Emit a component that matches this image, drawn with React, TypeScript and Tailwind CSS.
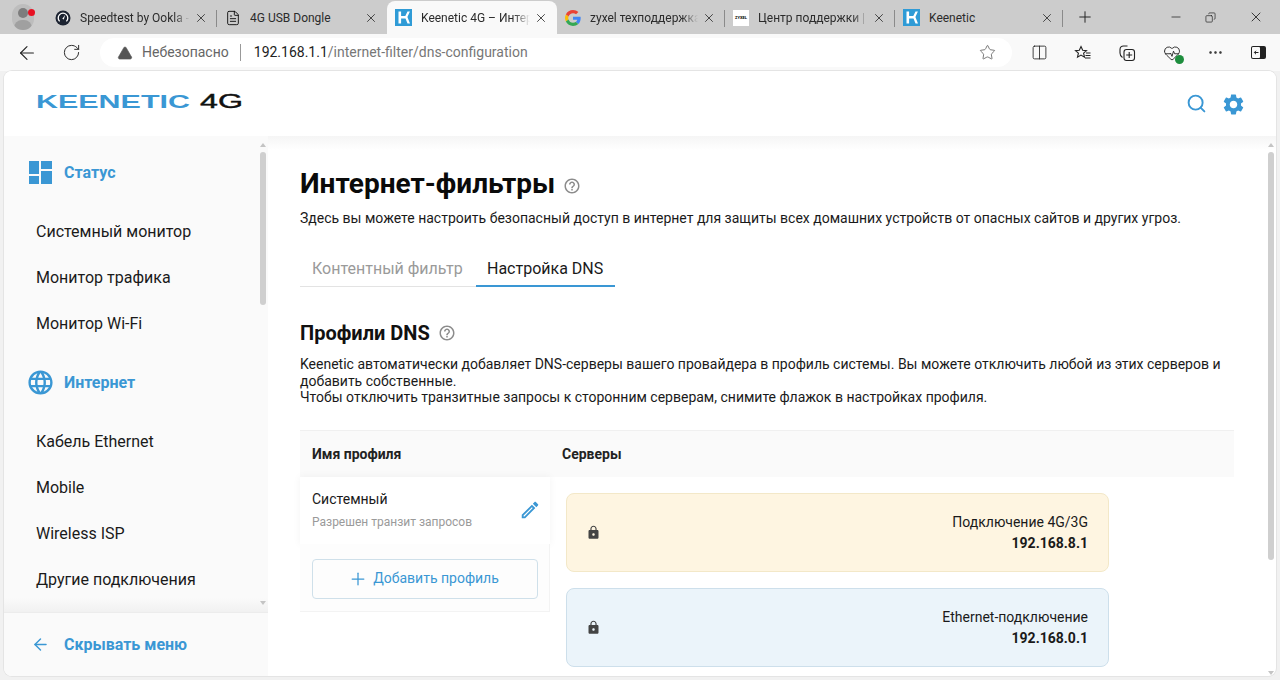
import { ArrowLeft, Columns2, FileText, Minus, MoreHorizontal, Plus, RotateCw, Search, Star, TriangleAlert, X, HeartPulse, Copy } from "lucide-react";
import { MdHelpOutline, MdLanguage, MdLock, MdOutlineEdit, MdSettings } from "react-icons/md";

const BLUE = "#3a97d4";

function KIcon() {
    return (
        <svg width="17" height="17" viewBox="0 0 17 17" className="shrink-0">
            <rect width="17" height="17" fill="#2f9bd6" />
            <path d="M3.5 2.5h2.600v4.600h4.200l2.200-4.600h2.400l-2.500 5.600 2.600 6.400h-2.500l-2-5H6.100v5H3.500z" fill="#fff" />
        </svg>
    );
}

function GoogleIcon() {
    return (
        <svg width="16" height="16" viewBox="0 0 48 48" className="shrink-0">
            <path fill="#EA4335" d="M24 9.500c3.500 0 6.700 1.200 9.200 3.600l6.900-6.900C35.900 2.400 30.400 0 24 0 14.600 0 6.500 5.400 2.600 13.200l8 6.200C12.500 13.600 17.800 9.500 24 9.500z" />
            <path fill="#4285F4" d="M47 24.500c0-1.600-.1-3.100-.4-4.500H24v9h12.900c-.6 3-2.200 5.500-4.700 7.200l7.700 6C44.400 38 47 31.800 47 24.500z" />
            <path fill="#FBBC05" d="M10.600 28.600c-.5-1.400-.8-3-.8-4.600s.3-3.200.8-4.600l-8-6.200C.9 16.500 0 20.100 0 24s.9 7.500 2.600 10.800l8-6.200z" />
            <path fill="#34A853" d="M24 48c6.500 0 11.900-2.100 15.900-5.800l-7.700-6c-2.200 1.400-4.900 2.300-8.200 2.300-6.200 0-11.500-4.100-13.400-9.900l-8 6.200C6.500 42.600 14.600 48 24 48z" />
        </svg>
    );
}

function SpeedIcon() {
    return (
        <svg width="16" height="16" viewBox="0 0 16 16" className="shrink-0">
            <circle cx="8" cy="8" r="7.500" fill="#1c2331" />
            <path d="M4.600 11.400a4.800 4.800 0 1 1 6.800 0" fill="none" stroke="#fff" strokeWidth="1.300" />
            <path d="M7.300 8.800l3-4-1.500 4.800z" fill="#fff" />
        </svg>
    );
}

function ZyxelIcon() {
    return (
        <div className="flex h-4 w-4 shrink-0 items-center justify-center bg-white text-[4px] font-bold leading-none text-black">ZYXEL</div>
    );
}

function Tab({ icon, title, active, sep = true, fade, w = "w-[170px]" }: { icon: React.ReactNode; title: string; active?: boolean; sep?: boolean; fade?: boolean; w?: string }) {
    return (
        <div className={`relative flex h-full shrink-0 items-center pl-2 pr-[9px] ${w} ${active ? "rounded-t-lg bg-[#f9f9f9]" : ""}`}>
            {icon}
            <span className={`ml-[9px] min-w-0 flex-1 overflow-hidden whitespace-nowrap text-[12px] text-[#2b2b2b] ${fade ? "[mask-image:linear-gradient(to_right,black_85%,transparent)]" : ""}`}>{title}</span>
            <X size={14} strokeWidth={1.500} className="ml-1 shrink-0 text-[#333]" />
            {sep && <div className="absolute right-0 top-[9px] h-[17px] w-px bg-[#8a8a8a]" />}
        </div>
    );
}

function NavItem({ label }: { label: string }) {
    return <div className="flex h-[46px] items-center pl-8 pt-[2px] text-[16px] text-[#1a1a1a]">{label}</div>;
}

function NavSection({ icon, label }: { icon: React.ReactNode; label: string }) {
    return (
        <div className="mb-[13px] flex h-[46px] items-center pl-6 text-[16px] font-bold text-[#3a97d4]">
            <div className="flex w-[24px] justify-center">{icon}</div>
            <span className="ml-3 pt-[1px]">{label}</span>
        </div>
    );
}

function Help({ size }: { size: number }) {
    return <MdHelpOutline size={size} className="text-[#8c8c8c]" />;
}

function ScrollArrow({ up, className }: { up?: boolean; className: string }) {
    return (
        <div className={`absolute h-0 w-0 border-x-[3px] border-x-transparent ${up ? "border-b-[4px] border-b-[#c4c4c4]" : "border-t-[4px] border-t-[#c4c4c4]"} ${className}`} />
    );
}

function ServerCard({ name, ip, tone }: { name: string; ip: string; tone: "yellow" | "blue" }) {
    return (
        <div className={`flex h-[79px] w-[543px] items-center justify-between rounded-lg border pl-[19px] pr-5 ${tone === "yellow" ? "border-[#f3e8c8] bg-[#fef5e1]" : "border-[#cddfeb] bg-[#ebf4fa]"}`}>
            <MdLock size={15} className="text-[#444]" />
            <div className="pt-[1px] text-right text-[14px] leading-[21px] text-[#1a1a1a]">
                <div>{name}</div>
                <div className="font-bold">{ip}</div>
            </div>
        </div>
    );
}

export default function App() {
    return (
        <div className="flex h-[680px] w-[1280px] flex-col overflow-hidden bg-[#f1f1f1] font-['Roboto',sans-serif]">
            {/* browser tabs */}
            <div className="flex h-[34px] shrink-0 items-center bg-[#cccccc]">
                <div className="relative flex w-[47px] justify-center pr-[2px]">
                    <div className="relative h-[26px] w-[22px] overflow-hidden rounded-full bg-[#bdbdbd]">
                        <div className="absolute left-[6px] top-[4px] h-[10px] w-[10px] rounded-full bg-[#7d7d7d]" />
                        <div className="absolute bottom-0 left-[2px] h-[10px] w-[18px] rounded-t-lg bg-[#a0a0a0]" />
                    </div>
                    <div className="absolute left-[28px] top-[5px] h-[7px] w-[7px] rounded-full bg-[#e81123]" />
                </div>
                <div className="flex h-full flex-1 items-end">
                    <div className="flex h-[34px] pt-[1px]">
                        <Tab icon={<SpeedIcon />} title="Speedtest by Ookla -" fade />
                        <Tab icon={<FileText size={16} strokeWidth={1.300} className="shrink-0" />} title="4G USB Dongle" sep={false} />
                        <Tab icon={<KIcon />} title="Keenetic 4G – Интер" active fade sep={false} />
                        <Tab icon={<GoogleIcon />} title="zyxel техподдержка" fade w="w-[168px]" />
                        <Tab icon={<ZyxelIcon />} title="Центр поддержки |" fade />
                        <Tab icon={<KIcon />} title="Keenetic" w="w-[168px]" />
                    </div>
                    <div className="flex h-full items-center pl-[13px]">
                        <Plus size={18} strokeWidth={1.300} className="text-[#222]" />
                    </div>
                </div>
                <div className="flex h-full w-[136px] items-center justify-between pl-[25px] pr-[16px] text-[#222]">
                    <Minus size={14} strokeWidth={1.300} />
                    <Copy size={11} strokeWidth={1.500} className="mr-[10px] -scale-x-100" />
                    <X size={16} strokeWidth={1.300} />
                </div>
            </div>

            {/* address bar */}
            <div className="flex h-[37px] shrink-0 items-center bg-[#f9f9f9]">
                <div className="flex w-[100px] items-center pl-[16px]">
                    <ArrowLeft size={22} strokeWidth={1.200} className="text-[#222]" />
                    <RotateCw size={19} strokeWidth={1.200} className="ml-[24px] text-[#222]" />
                </div>
                <div className="flex h-[29px] w-[912px] items-center rounded-full bg-white pl-[17px] pr-[16px] text-[14px]">
                    <TriangleAlert size={16} fill="#555" strokeWidth={1} className="text-[#555]" />
                    <span className="ml-[9px] text-[#666]">Небезопасно</span>
                    <div className="ml-[11px] h-[17px] w-px bg-[#999]" />
                    <span className="ml-[13px] text-[#222]">192.168.1.1</span>
                    <span className="text-[#777]">/internet-filter/dns-configuration</span>
                    <Star size={17} strokeWidth={1.100} className="ml-auto text-[#555]" />
                </div>
                <div className="flex flex-1 items-center justify-between pl-[19px] pr-[13px] text-[#222]">
                    <Columns2 size={17} strokeWidth={1.200} />
                    <svg width="18" height="18" viewBox="0 0 18 18" fill="none" stroke="currentColor" strokeWidth="1.100">
                        <path d="M7 2.500l1.700 3.700 3.800.4-2.900 2.600.9 4L7 11.100l-3.500 2.100.9-4L1.500 6.600l3.800-.4z" />
                        <path d="M12 9h4.500M11.500 11.500h5M11 14h5.500" />
                    </svg>
                    <svg width="18" height="18" viewBox="0 0 18 18" fill="none" stroke="currentColor" strokeWidth="1.100">
                        <path d="M4.500 13.500C2.800 12.500 2 11 2 9V5.500C2 3.500 3.500 2 5.500 2h4" />
                        <rect x="6" y="5.500" width="10.500" height="11" rx="2.500" />
                        <path d="M11.200 8v6M8.200 11h6" />
                    </svg>
                    <div className="relative">
                        <HeartPulse size={18} strokeWidth={1.200} />
                        <div className="absolute -bottom-[2px] -right-[3px] h-[9px] w-[9px] rounded-full bg-[#1e8e3e]" />
                    </div>
                    <MoreHorizontal size={17} strokeWidth={1.500} />
                    <svg width="17" height="17" viewBox="0 0 17 17">
                        <rect x="1" y="2" width="15" height="13" rx="2" fill="#222" />
                        <rect x="2" y="3" width="8" height="11" rx="1" fill="#f9f9f9" />
                        <path d="M8.500 8.500h-4M6 6.800L4.300 8.500 6 10.200" fill="none" stroke="#222" strokeWidth="1" />
                    </svg>
                </div>
            </div>

            {/* page */}
            <div className="mx-1 mb-1 flex min-h-0 flex-1 flex-col overflow-hidden rounded-lg bg-white shadow-[0_0_0_1px_#e4e4e4]">
                <div className="relative z-10 flex h-[65px] shrink-0 items-center justify-between bg-white pl-[32px] pr-[30px]">
                    <svg width="208" height="20" viewBox="0 0 208 20" aria-label="Keenetic 4G" className="-mt-[6px]">
                        <text x="0" y="16.500" textLength="154" lengthAdjust="spacingAndGlyphs" fontFamily="Liberation Sans" fontSize="19" fontWeight="700" fill={BLUE}>KEENETIC</text>
                        <text x="164" y="17" textLength="43" lengthAdjust="spacingAndGlyphs" fontFamily="Liberation Sans" fontSize="20" fontWeight="400" stroke="#111" strokeWidth="0.400" fill="#111">4G</text>
                    </svg>
                    <div className="flex items-center gap-[14px]">
                        <Search size={21} strokeWidth={2.200} className="text-[#3a97d4]" />
                        <MdSettings size={25} className="mt-[1px] text-[#3a97d4]" />
                    </div>
                </div>

                <div className="flex min-h-0 flex-1">
                    {/* sidebar */}
                    <div className="relative flex w-[264px] shrink-0 flex-col bg-[#fafafa]">
                        <div className="relative min-h-0 flex-1 overflow-hidden pt-[13px]">
                            <NavSection
                                label="Статус"
                                icon={
                                    <svg width="23" height="23" viewBox="0 0 23 23" fill="#3a97d4">
                                        <rect x="0" y="0" width="10" height="13" />
                                        <rect x="12" y="0" width="11" height="8" />
                                        <rect x="0" y="15" width="10" height="8" />
                                        <rect x="12" y="10" width="11" height="13" />
                                    </svg>
                                }
                            />
                            <NavItem label="Системный монитор" />
                            <NavItem label="Монитор трафика" />
                            <NavItem label="Монитор Wi-Fi" />
                            <div className="h-[13px]" />
                            <NavSection label="Интернет" icon={<MdLanguage size={29} className="shrink-0" />} />
                            <NavItem label="Кабель Ethernet" />
                            <NavItem label="Mobile" />
                            <NavItem label="Wireless ISP" />
                            <NavItem label="Другие подключения" />
                            <div className="absolute inset-x-0 bottom-0 h-[14px] bg-gradient-to-b from-transparent to-[#f1f1f1]" />
                        </div>
                        <div className="flex h-[64px] shrink-0 items-center border-t border-[#ececec] pl-[27px] text-[16px] font-bold text-[#3a97d4]">
                            <ArrowLeft size={19} strokeWidth={1.800} />
                            <span className="ml-[14px]">Скрывать меню</span>
                        </div>
                        {/* scrollbar */}
                        <ScrollArrow up className="right-[2px] top-[7px]" />
                        <div className="absolute right-[2px] top-[16px] h-[153px] w-[6px] rounded-full bg-[#cfcfcf]" />
                        <ScrollArrow className="bottom-[71px] right-[2px]" />
                    </div>

                    {/* main */}
                    <div className="relative min-w-0 flex-1 overflow-hidden pl-8 pr-[42px] pt-[30px]">
                        <div className="absolute inset-x-0 top-0 h-[14px] bg-gradient-to-b from-[#f5f5f5] to-transparent" />
                        <div className="flex items-center">
                            <h1 className="text-[28px] font-bold leading-[36px] text-[#0a0a0a]">Интернет-фильтры</h1>
                            <div className="ml-2 mt-[3px]"><Help size={18} /></div>
                        </div>
                        <p className="mt-[6px] whitespace-nowrap text-[14px] leading-[20px] text-[#1a1a1a]">
                            Здесь вы можете настроить безопасный доступ в интернет для защиты всех домашних устройств от опасных сайтов и других угроз.
                        </p>
                        <div className="mt-[21px] flex text-[16px]">
                            <div className="h-[38px] w-[176px] border-b border-[#e3e3e3] pl-3 pt-[8px] text-[#9a9a9a]">Контентный фильтр</div>
                            <div className="h-[38px] w-[139px] border-b-2 border-[#3a97d4] pl-[11px] pt-[8px] text-[#1a1a1a]">Настройка DNS</div>
                        </div>
                        <div className="mt-[32px] flex items-center">
                            <h2 className="text-[20px] font-bold leading-[28px] text-[#111]">Профили DNS</h2>
                            <div className="ml-2"><Help size={18} /></div>
                        </div>
                        <p className="mt-[9px] w-[930px] text-[14px] leading-[16.500px] text-[#1a1a1a]">
                            Keenetic автоматически добавляет DNS-серверы вашего провайдера в профиль системы. Вы можете отключить любой из этих серверов и добавить собственные.
                            <br />
                            Чтобы отключить транзитные запросы к сторонним серверам, снимите флажок в настройках профиля.
                        </p>

                        <div className="mt-[24px] flex h-[47px] items-center border-t border-[#f0f0f0] bg-[#fafafa] pt-[2px] text-[14px] font-bold text-[#222]">
                            <div className="w-[262px] pl-3">Имя профиля</div>
                            <div>Серверы</div>
                        </div>
                        <div className="flex">
                            <div className="w-[250px] shrink-0">
                                <div className="flex h-[67px] items-center justify-between bg-white pl-3 pr-[9px] shadow-[0_0_8px_rgba(0,0,0,0.05)]">
                                    <div>
                                        <div className="-mt-[1px] text-[14px] leading-[20px] text-[#1a1a1a]">Системный</div>
                                        <div className="mt-[5px] text-[12px] leading-[16px] text-[#9a9a9a]">Разрешен транзит запросов</div>
                                    </div>
                                    <MdOutlineEdit size={22} className="text-[#3a97d4]" />
                                </div>
                                <div className="h-[68px] border-b border-r border-[#f3f3f3] bg-[#fdfdfd] pl-3 pr-3 pt-[15px]">
                                    <div className="flex h-[40px] w-[226px] items-center justify-center rounded border border-[#cfe0ea] text-[14px] text-[#3a97d4]">
                                        <Plus size={20} strokeWidth={1.500} className="-ml-[3px]" />
                                        <span className="ml-[5px]">Добавить профиль</span>
                                    </div>
                                </div>
                            </div>
                            <div className="ml-4 flex flex-col gap-4 pt-4">
                                <ServerCard name="Подключение 4G/3G" ip="192.168.8.1" tone="yellow" />
                                <ServerCard name="Ethernet-подключение" ip="192.168.0.1" tone="blue" />
                            </div>
                        </div>
                        {/* scrollbar */}
                        <ScrollArrow up className="right-[2px] top-[7px]" />
                        <div className="absolute right-[2px] top-[16px] h-[408px] w-[6px] rounded-full bg-[#cfcfcf]" />
                        <ScrollArrow className="bottom-[1px] right-[2px]" />
                    </div>
                </div>
            </div>
        </div>
    );
}
